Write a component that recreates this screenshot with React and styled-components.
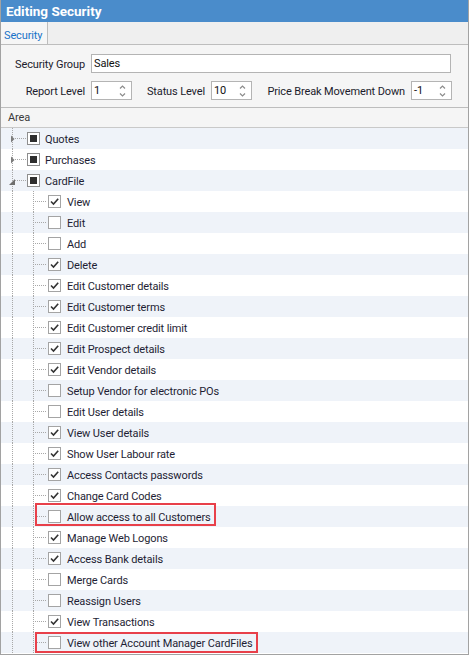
import React from 'react';
import styled, { createGlobalStyle } from 'styled-components';

const GlobalStyle = createGlobalStyle`
  html, body {
    margin: 0;
    padding: 0;
    background: #ffffff;
  }
  body {
    font-family: Roboto, "Liberation Sans", sans-serif;
    letter-spacing: -0.13px;
  }
`;

const groups = [
    { name: 'Quotes', open: false },
    { name: 'Purchases', open: false },
    { name: 'CardFile', open: true },
];

const cardFile = [
    { name: 'View', on: true },
    { name: 'Edit', on: false },
    { name: 'Add', on: false },
    { name: 'Delete', on: true },
    { name: 'Edit Customer details', on: true },
    { name: 'Edit Customer terms', on: true },
    { name: 'Edit Customer credit limit', on: true },
    { name: 'Edit Prospect details', on: true },
    { name: 'Edit Vendor details', on: true },
    { name: 'Setup Vendor for electronic POs', on: false },
    { name: 'Edit User details', on: false },
    { name: 'View User details', on: true },
    { name: 'Show User Labour rate', on: true },
    { name: 'Access Contacts passwords', on: true },
    { name: 'Change Card Codes', on: true },
    { name: 'Allow access to all Customers', on: false, mark: { top: -3, bottom: 1 } },
    { name: 'Manage Web Logons', on: true },
    { name: 'Access Bank details', on: true },
    { name: 'Merge Cards', on: false },
    { name: 'Reassign Users', on: false },
    { name: 'View Transactions', on: true },
    { name: 'View other Account Manager CardFiles', on: false, mark: { top: 0, bottom: 0 } },
];

const Spinner = ({ value }) => (
    <SpinBox>
        <span>{value}</span>
        <svg width="7" height="14" viewBox="0 0 7 14">
            <path d="M1 4.5 L3.5 2 L6 4.5" fill="none" stroke="#8c8c8c" strokeWidth="1.2" />
            <path d="M1 9.5 L3.5 12 L6 9.5" fill="none" stroke="#8c8c8c" strokeWidth="1.2" />
        </svg>
    </SpinBox>
);

const GroupGuides = ({ open }) => (
    <svg width="26" height="21" viewBox="0 0 26 21">
        <line x1="11.5" y1="0" x2="11.5" y2="21" stroke="#a8a8a8" strokeDasharray="1 1" />
        <line x1="14" y1="10.5" x2="26" y2="10.5" stroke="#a8a8a8" strokeDasharray="1 1" />
        {open
            ? <polygon points="14,9 14,15 8,15" fill="#6e6e6e" />
            : <polygon points="10,7.5 13.5,11 10,14.5" fill="#7c7c7c" />}
    </svg>
);

const ChildGuides = () => (
    <svg width="34" height="21" viewBox="0 0 34 21">
        <line x1="11.5" y1="0" x2="11.5" y2="21" stroke="#a8a8a8" strokeDasharray="1 1" />
        <line x1="32.5" y1="0" x2="32.5" y2="21" stroke="#a8a8a8" strokeDasharray="1 1" />
    </svg>
);

const App = () => {
    let index = 0;
    const rows = [];

    groups.forEach((group) => {
        rows.push(
            <Row key={group.name} $shade={index++ % 2 === 0}>
                <GroupGuides open={group.open} />
                <GroupBox><span /></GroupBox>
                <GroupName>{group.name}</GroupName>
            </Row>
        );
        if (group.open) {
            cardFile.forEach((item) => {
                rows.push(
                    <Row key={item.name} $shade={index++ % 2 === 0}>
                        <ChildGuides />
                        <Entry $mark={item.mark}>
                            <Stub />
                            <CheckBox>
                                {item.on && (
                                    <svg width="11" height="11" viewBox="0 0 11 11">
                                        <path d="M2 5.5 L4.5 8 L9.2 2.8" fill="none" stroke="#333" strokeWidth="1.6" />
                                    </svg>
                                )}
                            </CheckBox>
                            <ItemName>{item.name}</ItemName>
                        </Entry>
                    </Row>
                );
            });
        }
    });

    return (
        <>
            <GlobalStyle />
            <Window>
                <TitleBar>Editing Security</TitleBar>
                <TabStrip>
                    <Tab>Security</Tab>
                </TabStrip>
                <Panel>
                    <FieldLabel>Security Group</FieldLabel>
                    <TextBox>Sales</TextBox>
                    <FieldLabel>Report Level</FieldLabel>
                    <Spinner value="1" />
                    <FieldLabel>Status Level</FieldLabel>
                    <Spinner value="10" />
                    <FieldLabel>Price Break Movement Down</FieldLabel>
                    <Spinner value="-1" />
                </Panel>
                <GridHeader>Area</GridHeader>
                <Tree>{rows}</Tree>
            </Window>
        </>
    );
};

const Window = styled.div`
    width: 469px;
    height: 655px;
    box-sizing: border-box;
    border: 1px solid #a2a2a2;
    border-top: none;
    display: flex;
    flex-direction: column;
    overflow: hidden;
    background: #ffffff;
`

const TitleBar = styled.div`
    height: 22px;
    margin: 0 -1px;
    padding-left: 6px;
    background: #4a8ccb;
    color: #ffffff;
    font-size: 13.5px;
    font-weight: bold;
    line-height: 23px;
    letter-spacing: 0;
`

const TabStrip = styled.div`
    height: 22px;
    display: flex;
    background: #efefef;
    border-bottom: 1px solid #bdbdbd;
`

const Tab = styled.div`
    width: 43px;
    padding-left: 3px;
    background: #f6f6f6;
    border-right: 1px solid #bdbdbd;
    color: #1a73c8;
    font-size: 11px;
    line-height: 28px;
`

const Panel = styled.div`
    display: grid;
    grid-template-columns: 83px 41px 79px 41px 159px 41px;
    grid-auto-rows: 19px;
    row-gap: 8px;
    align-items: center;
    padding: 9px 0 7px 7px;
    background: #f5f5f5;
    border-bottom: 1px solid #bdbdbd;
`

const FieldLabel = styled.div`
    padding-right: 6px;
    padding-top: 1px;
    text-align: right;
    font-size: 11px;
    color: #1c1c2c;
    white-space: nowrap;
`

const TextBox = styled.div`
    grid-column: 2 / -1;
    width: 360px;
    height: 19px;
    box-sizing: border-box;
    padding-left: 2px;
    border: 1px solid #b4b4b4;
    background: #ffffff;
    font-size: 11px;
    line-height: 17px;
    color: #111;
`

const SpinBox = styled.div`
    height: 19px;
    box-sizing: border-box;
    display: flex;
    align-items: center;
    justify-content: space-between;
    padding: 0 5px 0 2px;
    border: 1px solid #b4b4b4;
    background: #ffffff;
    font-size: 11px;
    color: #111;
`

const GridHeader = styled.div`
    height: 19px;
    padding-left: 7px;
    background: #f5f5f5;
    border-bottom: 1px solid #c9c9c9;
    font-size: 11px;
    line-height: 20px;
    color: #3a3a3a;
`

const Tree = styled.div`
    flex: 1;
    background: #ffffff;
`

const Row = styled.div`
    height: 21px;
    display: flex;
    align-items: center;
    background: ${(p) => (p.$shade ? '#eff3f9' : '#ffffff')};

    & > svg {
        display: block;
        flex-shrink: 0;
    }
`

const GroupBox = styled.div`
    width: 13px;
    height: 13px;
    box-sizing: border-box;
    border: 1px solid #8e8e8e;
    background: #ffffff;
    display: flex;
    align-items: center;
    justify-content: center;

    span {
        width: 7px;
        height: 7px;
        background: #2e2e2e;
    }
`

const GroupName = styled.span`
    margin-left: 5px;
    padding-top: 1px;
    font-size: 11px;
    color: #1e1e34;
`

const Entry = styled.div`
    position: relative;
    height: 21px;
    display: flex;
    align-items: center;
    padding-right: 5px;

    ${(p) => p.$mark && `
        &::after {
            content: '';
            position: absolute;
            left: 0;
            right: 0;
            top: ${p.$mark.top}px;
            bottom: ${p.$mark.bottom}px;
            border: 2px solid #e8404a;
        }
    `}
`

const Stub = styled.div`
    width: 11px;
    margin-right: 2px;
    border-top: 1px dotted #a8a8a8;
`

const CheckBox = styled.div`
    width: 13px;
    height: 13px;
    box-sizing: border-box;
    border: 1px solid #a4a4a4;
    background: #ffffff;
    display: flex;
    align-items: center;
    justify-content: center;

    svg {
        display: block;
    }
`

const ItemName = styled.span`
    margin-left: 6px;
    padding-top: 1px;
    font-size: 11px;
    color: #1e1e34;
    white-space: nowrap;
`

export default App
